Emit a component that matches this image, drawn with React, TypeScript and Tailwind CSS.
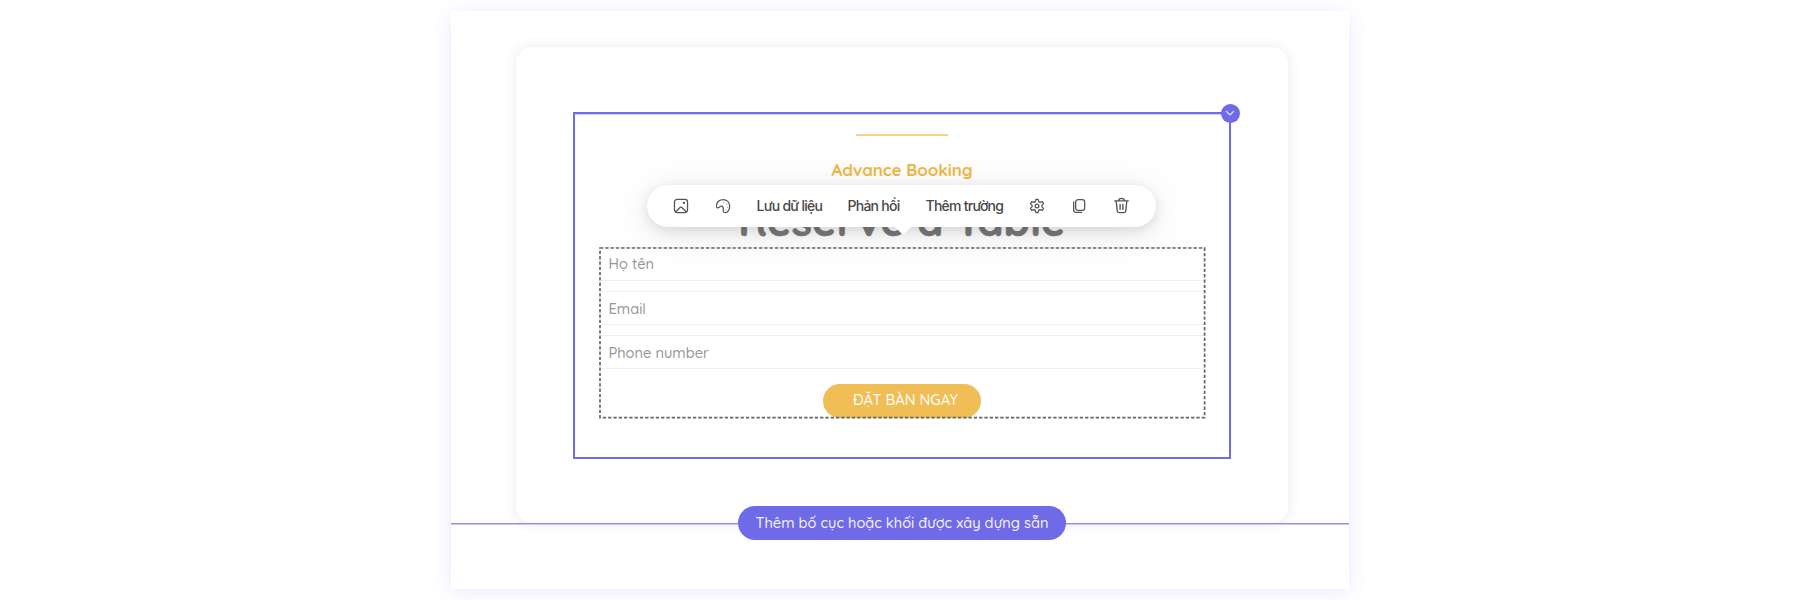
import type { ReactNode } from "react";

function Icon({ children, className }: { children: ReactNode; className: string }) {
  return (
    <svg
      viewBox="0 0 24 24"
      className={`shrink-0 ${className}`}
      fill="none"
      stroke="#555"
      strokeWidth="1.9"
      strokeLinecap="round"
      strokeLinejoin="round"
    >
      {children}
    </svg>
  );
}

function Field({ label }: { label: string }) {
  return (
    <div className="flex h-[34px] shrink-0 items-center border-y border-[#efefef] pt-px pl-[7.5px] text-[14.6px] font-medium text-[#969696]">
      <span className="whitespace-nowrap">{label}</span>
    </div>
  );
}

function Toolbar() {
  return (
    <div className="absolute top-[70.5px] left-[72px] flex h-[42px] w-[508.5px] items-center rounded-full bg-white pl-[26px] font-['Inter',sans-serif] text-[14px] font-medium text-[#484848] shadow-[0_3px_12px_rgba(0,0,0,0.10),0_6px_36px_rgba(0,0,0,0.11)]">
      <Icon className="size-4">
        <rect x="2.2" y="2.2" width="19.6" height="19.6" rx="4" />
        <path d="M4 20.5l7-6.500q1-.8 2 0l7 6.500" />
        <circle cx="16.5" cy="7.5" r=".8" />
      </Icon>
      <Icon className="ml-[26px] size-4">
        <path d="M2.500 14C1 8 5 2.500 12 2.500c6 0 10 4 10 10 0 5.500-3 9.500-6.500 9.500-4.500 0-3-4-3-6.500 0-3-3-4-5-2.500-2 1.500-4 3-5 1z" />
        <path d="M13 7h.01M17.500 9.500h.01M18.500 14h.01M16.500 18h.01" strokeWidth="1.7" stroke="#999" />
      </Icon>
      <span className="ml-[25.5px] w-[66px] whitespace-nowrap tracking-[-0.75px]">Lưu dữ liệu</span>
      <span className="ml-[25px] w-[53px] whitespace-nowrap tracking-[-0.75px]">Phản hồi</span>
      <span className="ml-[25px] w-[78px] whitespace-nowrap tracking-[-0.75px]">Thêm trường</span>
      <Icon className="ml-[25.5px] size-4">
        <path d="M9.500 5.500 10.300 2h3.400l.8 3.500 2 1.100L20 5.500l1.800 3-2.500 2.500v2l2.500 2.500-1.800 3-3.500-1.100-2 1.100-.8 3.500h-3.400l-.8-3.500-2-1.100L4 18.500l-1.800-3L4.700 13v-2L2.200 8.500l1.800-3 3.500 1.100z" />
        <circle cx="12" cy="12" r="2.8" />
      </Icon>
      <Icon className="ml-[26px] size-4">
        <rect x="7" y="2.5" width="13.5" height="16" rx="3.5" />
        <path d="M4 6v12c0 2.500 1 3.500 3.500 3.500H16" />
      </Icon>
      <Icon className="ml-[26px] h-[17px] w-[17px]">
        <path d="M2.500 5.500h19M8 5.500C8 3 9 2 12 2s4 1 4 3.500M4.500 5.500l1.500 14c.2 2 1 2.500 3 2.500h6c2 0 2.800-.5 3-2.500l1.500-14M10 10.500v7M14 10.500v7" />
      </Icon>
      <svg viewBox="0 0 18 10" className="absolute top-[41.5px] left-[247px] h-[10px] w-[18px]">
        <path d="M0 0h18L10.500 7.500q-1.500 1.500-3 0z" fill="#fff" />
      </svg>
    </div>
  );
}

export default function App() {
  return (
    <main className="flex h-[600px] w-full items-center justify-center overflow-hidden bg-white font-['Quicksand','Lato',sans-serif]">
      <section className="relative h-[578px] w-[898px] bg-white px-[65px] pt-9 shadow-[0_3px_18px_rgba(90,75,235,0.12)]">
        <div className="h-[476px] w-[772px] rounded-[17px] bg-white pt-[65px] pl-[57px] shadow-[0_0_14px_rgba(0,0,0,0.09)]">
          <div className="relative h-[347px] w-[658px] border-2 border-[#706be8] px-6 shadow-[inset_0_1px_0_#d3d1fa]">
            <div className="flex flex-col items-center">
              <div className="mt-5 h-[2px] w-[92px] bg-[#f8d188]" />
              <p className="mt-[22px] h-6 text-[17px] leading-6 font-bold tracking-[-0.1px] whitespace-nowrap text-[#f0b849]">
                Advance Booking
              </p>
              <h1 className="mt-[9px] h-[55.6px] text-[42px] leading-[60px] font-bold whitespace-nowrap text-[#7a7a7a] [-webkit-text-stroke:0.6px_#7a7a7a]">
                Reserve a Table
              </h1>
            </div>
            <Toolbar />
            <div className="relative flex h-[172px] w-[607px] flex-col gap-[10.4px] px-[2px]">
              <Field label="Họ tên" />
              <Field label="Email" />
              <Field label="Phone number" />
              <button className="mt-[3.8px] -ml-px flex h-[34px] w-[158px] shrink-0 items-center justify-center self-center rounded-full bg-[#f1bd55] pl-[7px] text-[14.8px] font-medium whitespace-nowrap text-white">
                ĐẶT BÀN NGAY
              </button>
              <svg className="pointer-events-none absolute inset-0 h-full w-full" fill="none">
                <rect x="1" y="1" width="604.6" height="169.6" stroke="#656565" strokeWidth="1.7" strokeDasharray="3.3 2" />
              </svg>
            </div>
            <button className="absolute -top-[10.5px] -right-[10.5px] flex size-[19px] items-center justify-center rounded-full bg-[#6f6ae8]" aria-label="Menu">
              <svg viewBox="0 0 10 6" className="h-[6px] w-[10px]" fill="none" stroke="#e4e2ff" strokeWidth="1.1">
                <path d="M1 1l4 4 4-4" />
              </svg>
            </button>
          </div>
        </div>
        <div className="absolute top-[495px] left-0 flex h-[34px] w-full items-center">
          <div className="mt-[2px] h-[2px] w-[287px] border-t border-[#8f8aec] bg-[#cbc9f8]" />
          <button className="flex h-[34px] w-[328px] items-center justify-center rounded-full bg-[#6f6ae8] text-[14.6px] font-medium whitespace-nowrap text-[#f5f4ff]">
            Thêm bố cục hoặc khối được xây dựng sẵn
          </button>
          <div className="mt-[2px] h-[2px] flex-1 border-t border-[#8f8aec] bg-[#cbc9f8]" />
        </div>
      </section>
    </main>
  );
}
